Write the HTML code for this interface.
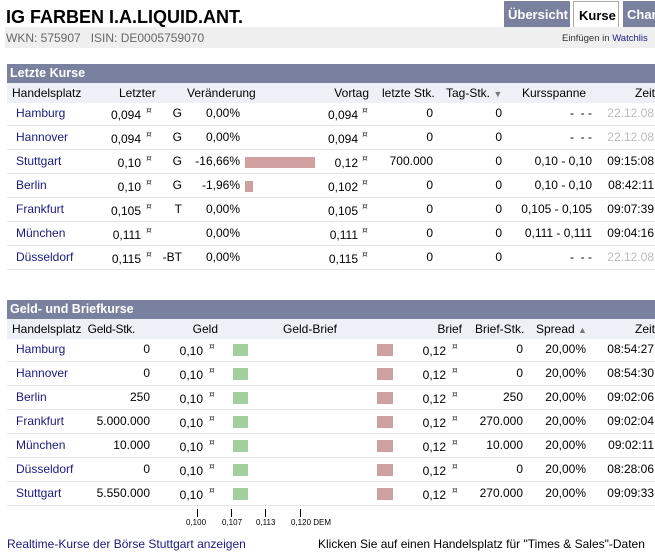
<!DOCTYPE html>
<html><head><meta charset="utf-8"><style>
*{margin:0;padding:0;box-sizing:border-box}
body{width:655px;height:554px;overflow:hidden;background:#fff;font-family:"Liberation Sans",Arial,sans-serif;font-size:12px;color:#000;position:relative}
.a{position:absolute;white-space:nowrap}
.r{text-align:right}
.l{color:#1a1a80}
.sec{position:absolute;left:7px;width:648px;height:19px;background:#7a819f;color:#fff;font-weight:bold;font-size:12.5px;padding:2px 0 0 3px}
.hd{position:absolute;left:7px;width:648px;height:20px;background:#eef0f7}
.sep{position:absolute;left:7px;width:648px;height:1px;background:#e4e4e4}
.cur{font-size:9px;font-family:"DejaVu Sans",sans-serif;color:#333}
.tab{position:absolute;top:1px;height:27px;font-weight:bold;font-size:13px;padding:6px 0 0 4px;color:#fff;background:#7a819f}
</style></head><body>
<div class="a" style="left:6px;top:7px;font-size:18px;font-weight:bold">IG FARBEN I.A.LIQUID.ANT.</div>
<div class="tab" style="left:504px;width:66px">Übersicht</div>
<div class="tab" style="left:573px;width:46px;background:#fff;color:#000;border:1px solid #aaa;border-bottom:none;padding-left:5px">Kurse</div>
<div class="tab" style="left:623px;width:40px">Char</div>
<div class="a" style="left:5px;top:27px;width:650px;height:21px;background:#efefef"></div>
<div class="a" style="left:6px;top:31px;color:#666">WKN: 575907&nbsp;&nbsp; ISIN: DE0005759070</div>
<div class="a" style="left:562px;top:33px;font-size:9.5px;color:#333">Einfügen in <span class="l">Watchlis</span></div>

<div class="sec" style="top:64px">Letzte Kurse</div>
<div class="hd" style="top:83px"></div>
<div class="a" style="left:12px;top:86px">Handelsplatz</div>
<div class="a" style="left:119px;top:86px">Letzter</div>
<div class="a" style="left:187px;top:86px">Veränderung</div>
<div class="a r" style="left:300px;width:69px;top:86px">Vortag</div>
<div class="a" style="left:382px;top:86px">letzte Stk.</div>
<div class="a" style="left:446px;top:86px">Tag-Stk. <span style="color:#777;font-size:9px">▼</span></div>
<div class="a" style="left:522px;top:86px">Kursspanne</div>
<div class="a r" style="left:600px;width:55px;top:86px">Zeit</div>

<div id="t1"></div>
<div class="sec" style="top:300px">Geld- und Briefkurse</div>
<div class="hd" style="top:319px"></div>
<div class="a" style="left:12px;top:322px">Handelsplatz</div>
<div class="a r" style="left:80px;width:55px;top:322px;letter-spacing:-0.3px">Geld-Stk.</div>
<div class="a r" style="left:170px;width:48px;top:322px">Geld</div>
<div class="a" style="left:283px;top:322px">Geld-Brief</div>
<div class="a r" style="left:400px;width:62px;top:322px">Brief</div>
<div class="a" style="left:475px;top:322px">Brief-Stk.</div>
<div class="a" style="left:536px;top:322px">Spread <span style="color:#777;font-size:9px">▲</span></div>
<div class="a r" style="left:600px;width:55px;top:322px">Zeit</div>
<div id="t2"></div>

<div class="a" style="left:197px;top:509px;width:1px;height:8px;background:#000"></div>
<div class="a" style="left:231px;top:509px;width:1px;height:8px;background:#000"></div>
<div class="a" style="left:265px;top:509px;width:1px;height:8px;background:#000"></div>
<div class="a" style="left:300px;top:509px;width:1px;height:8px;background:#000"></div>
<div class="a" style="left:186px;top:518px;font-size:8px">0,100</div>
<div class="a" style="left:222px;top:518px;font-size:8px">0,107</div>
<div class="a" style="left:256px;top:518px;font-size:8px">0,113</div>
<div class="a" style="left:291px;top:518px;font-size:8px">0,120 DEM</div>
<div class="a l" style="left:7px;top:537px">Realtime-Kurse der Börse Stuttgart anzeigen</div>
<div class="a" style="left:318px;top:537px">Klicken Sie auf einen Handelsplatz für "Times &amp; Sales"-Daten</div>

<script>
var t1=[["Hamburg","0,094","G","0,00%",0,"0,094","0","0","- &nbsp;- -","22.12.08",1],
["Hannover","0,094","G","0,00%",0,"0,094","0","0","- &nbsp;- -","22.12.08",1],
["Stuttgart","0,10","G","-16,66%",70,"0,12","700.000","0","0,10 - 0,10","09:15:08",0],
["Berlin","0,10","G","-1,96%",8,"0,102","0","0","0,10 - 0,10","08:42:11",0],
["Frankfurt","0,105","T","0,00%",0,"0,105","0","0","0,105 - 0,105","09:07:39",0],
["München","0,111","","0,00%",0,"0,111","0","0","0,111 - 0,111","09:04:16",0],
["Düsseldorf","0,115","-BT","0,00%",0,"0,115","0","0","- &nbsp;- -","22.12.08",1]];
var h="";
t1.forEach(function(r,i){var y=103+i*24;
h+='<div class="a l" style="left:16px;top:'+(y+3)+'px">'+r[0]+'</div>';
h+='<div class="a r" style="left:90px;width:51px;top:'+(y+5)+'px">'+r[1]+'</div><div class="a cur" style="left:146px;top:'+(y+3)+'px">¤</div>';
h+='<div class="a r" style="left:150px;width:32px;top:'+(y+3)+'px">'+r[2]+'</div>';
h+='<div class="a r" style="left:180px;width:60px;top:'+(y+3)+'px">'+r[3]+'</div>';
if(r[4])h+='<div class="a" style="left:245px;top:'+(y+6)+'px;width:'+r[4]+'px;height:11px;background:#d09fa0"></div>';
h+='<div class="a r" style="left:300px;width:58px;top:'+(y+5)+'px">'+r[5]+'</div><div class="a cur" style="left:362px;top:'+(y+3)+'px">¤</div>';
h+='<div class="a r" style="left:380px;width:53px;top:'+(y+3)+'px">'+r[6]+'</div>';
h+='<div class="a r" style="left:450px;width:52px;top:'+(y+3)+'px">'+r[7]+'</div>';
h+='<div class="a r" style="left:500px;width:92px;top:'+(y+3)+'px">'+r[8]+'</div>';
h+='<div class="a r" style="left:590px;width:64px;top:'+(y+3)+'px;color:'+(r[10]?'#bbb':'#000')+'">'+r[9]+'</div>';
h+='<div class="sep" style="top:'+(y+22)+'px"></div>';});
document.getElementById("t1").outerHTML=h;
var t2=[["Hamburg","0","0","20,00%","08:54:27"],["Hannover","0","0","20,00%","08:54:30"],["Berlin","250","250","20,00%","09:02:06"],["Frankfurt","5.000.000","270.000","20,00%","09:02:04"],["München","10.000","10.000","20,00%","09:02:11"],["Düsseldorf","0","0","20,00%","08:28:06"],["Stuttgart","5.550.000","270.000","20,00%","09:09:33"]];
h="";
t2.forEach(function(r,i){var y=339+i*24;
h+='<div class="a l" style="left:16px;top:'+(y+3)+'px">'+r[0]+'</div>';
h+='<div class="a r" style="left:70px;width:80px;top:'+(y+3)+'px">'+r[1]+'</div>';
h+='<div class="a r" style="left:140px;width:63px;top:'+(y+5)+'px">0,10</div><div class="a cur" style="left:209px;top:'+(y+3)+'px">¤</div>';
h+='<div class="a" style="left:233px;top:'+(y+5)+'px;width:15px;height:12px;background:#a1d09e"></div>';
h+='<div class="a" style="left:377px;top:'+(y+5)+'px;width:16px;height:12px;background:#d09fa0"></div>';
h+='<div class="a r" style="left:400px;width:46px;top:'+(y+5)+'px">0,12</div><div class="a cur" style="left:452px;top:'+(y+3)+'px">¤</div>';
h+='<div class="a r" style="left:460px;width:63px;top:'+(y+3)+'px">'+r[2]+'</div>';
h+='<div class="a r" style="left:530px;width:56px;top:'+(y+3)+'px">'+r[3]+'</div>';
h+='<div class="a r" style="left:590px;width:64px;top:'+(y+3)+'px">'+r[4]+'</div>';
h+='<div class="sep" style="top:'+(y+22)+'px"></div>';});
document.getElementById("t2").outerHTML=h;
</script>
</body></html>
